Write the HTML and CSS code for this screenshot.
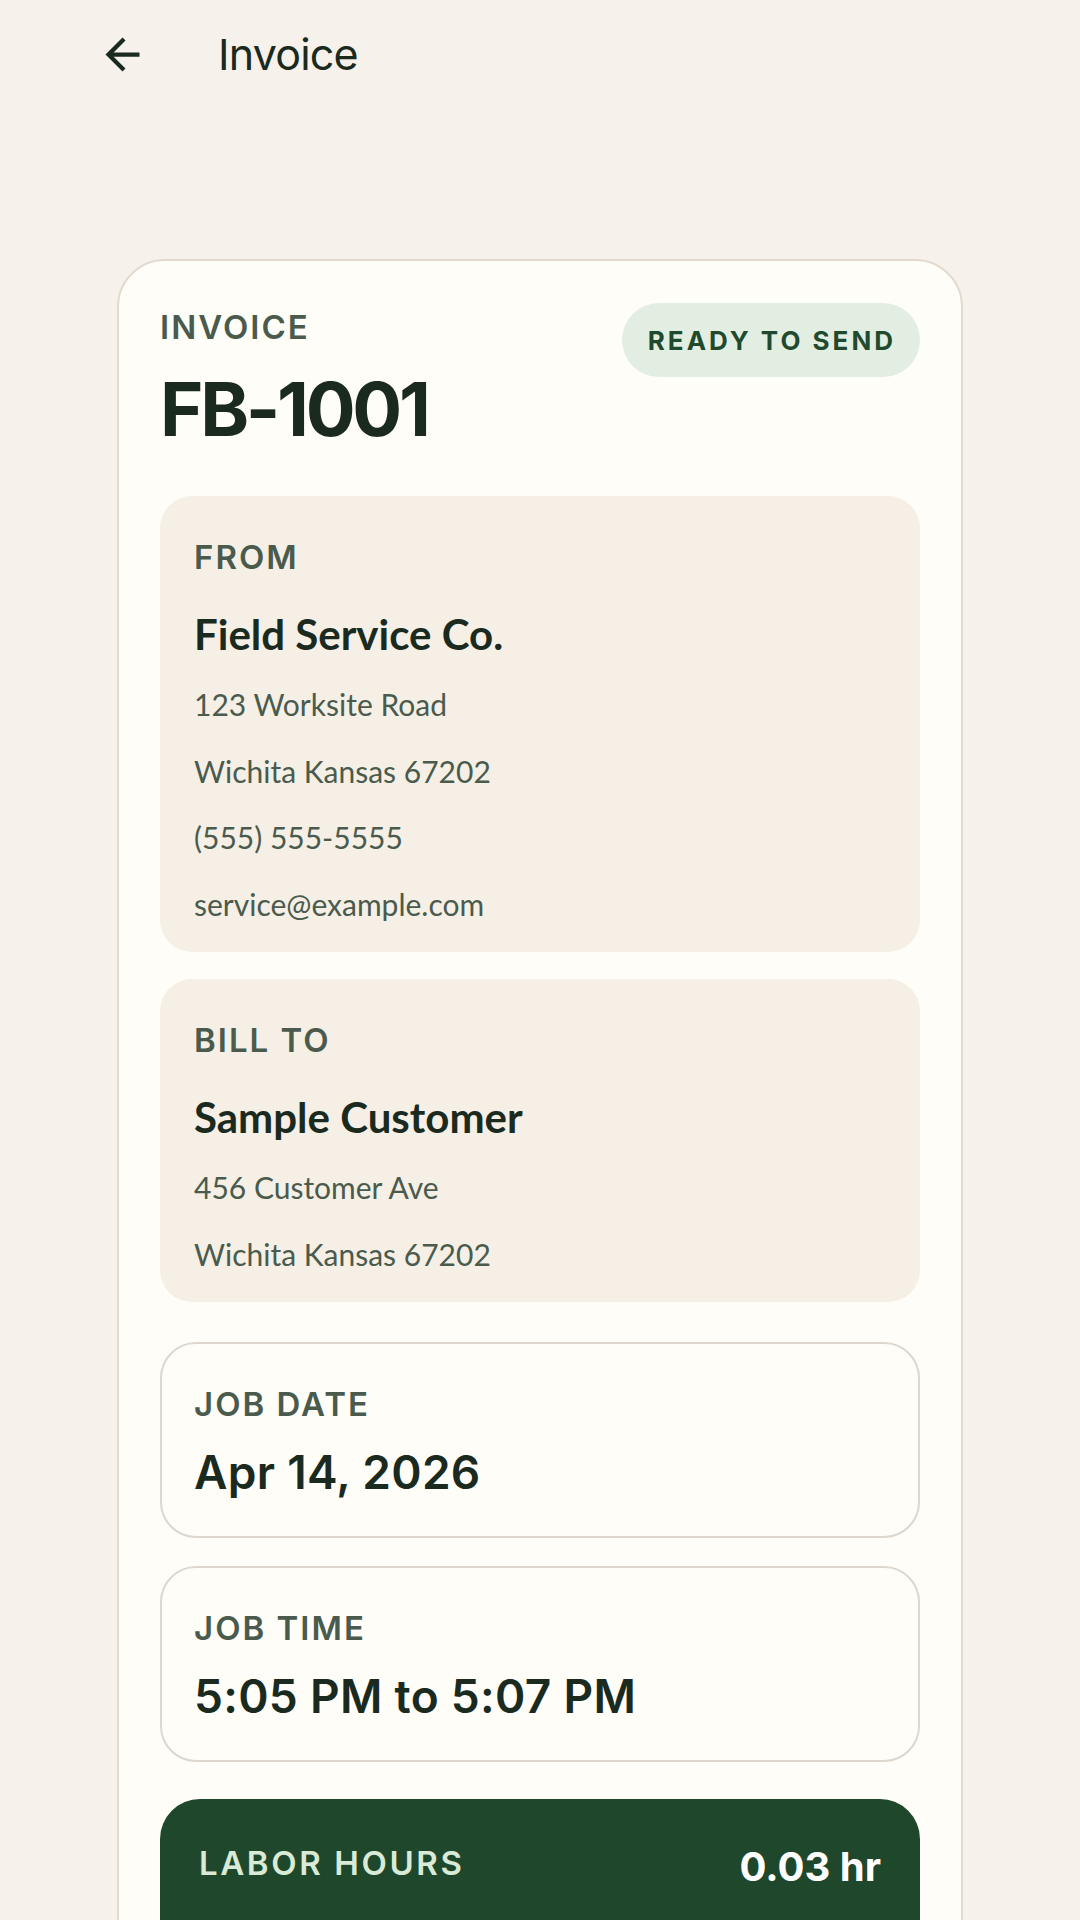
FILE: index.html
```html
<!DOCTYPE html>
<html lang="en">
<head>
<meta charset="utf-8">
<title>Invoice</title>
<link rel="stylesheet" href="styles.css">
</head>
<body>
<header class="topbar">
  <svg class="back" viewBox="0 0 24 24" aria-hidden="true"><path d="M20 11H7.83l5.59-5.59L12 4l-8 8 8 8 1.41-1.41L7.83 13H20v-2z"/></svg>
  <h1 class="title">Invoice</h1>
</header>
<main class="card">
  <div class="head">
    <div>
      <div class="eyebrow">INVOICE</div>
      <div class="number">FB-1001</div>
    </div>
    <div class="pill">READY TO SEND</div>
  </div>

  <section class="party">
    <div class="label">FROM</div>
    <div class="party-name">Field Service Co.</div>
    <div class="party-lines">
      <div class="party-line">123 Worksite Road</div>
      <div class="party-line">Wichita Kansas 67202</div>
      <div class="party-line">(555) 555-5555</div>
      <div class="party-line">service@example.com</div>
    </div>
  </section>

  <section class="party party-bill">
    <div class="label">BILL TO</div>
    <div class="party-name">Sample Customer</div>
    <div class="party-lines">
      <div class="party-line">456 Customer Ave</div>
      <div class="party-line">Wichita Kansas 67202</div>
    </div>
  </section>

  <section class="field field-date">
    <div class="label">JOB DATE</div>
    <div class="field-value">Apr 14, 2026</div>
  </section>

  <section class="field field-time">
    <div class="label">JOB TIME</div>
    <div class="field-value">5:05 PM to 5:07 PM</div>
  </section>

  <section class="labor">
    <div class="labor-label">LABOR HOURS</div>
    <div class="labor-value">0.03 hr</div>
  </section>
</main>
</body>
</html>
```
FILE: styles.css
```css
* { box-sizing: border-box; }

body {
  margin: 0;
  background: #f6f2eb;
  font-family: Inter, "Noto Sans", sans-serif;
  color: #1b2a1e;
}

.topbar {
  height: 108px;
  display: flex;
  align-items: center;
  padding-left: 97px;
}

.back {
  width: 51px;
  height: 51px;
  display: block;
  fill: #1b2a1e;
}

.title {
  margin: 0 0 0 70px;
  font-size: 43px;
  font-weight: 400;
  line-height: 52px;
  letter-spacing: -0.8px;
  color: #1b2a1e;
}

.card {
  display: block;
  margin: 151px 117px 0;
  background: #fffdf8;
  border: 2px solid #e2dacd;
  border-radius: 48px;
  padding: 42px 41px 60px;
}

.head {
  display: flex;
  justify-content: space-between;
  align-items: flex-start;
}

.eyebrow {
  margin-top: 4px;
  font-size: 33px;
  font-weight: 600;
  line-height: 40px;
  letter-spacing: 2px;
  color: #4a5b4d;
}

.number {
  margin-top: 22px;
  font-size: 74px;
  font-weight: 700;
  line-height: 81px;
  letter-spacing: -3.3px;
  color: #1b2a1e;
}

.pill {
  height: 74px;
  padding: 0 24px 0 26px;
  border-radius: 37px;
  background: #e3eee3;
  color: #1f4a2e;
  font-size: 26px;
  font-weight: 700;
  letter-spacing: 3px;
  display: flex;
  align-items: center;
}

.party {
  margin-top: 46px;
  background: #f5efe5;
  border-radius: 32px;
  padding: 41px 34px 15px;
}

.party-bill {
  margin-top: 27px;
}

.label {
  font-size: 33px;
  font-weight: 600;
  line-height: 40px;
  letter-spacing: 2px;
  color: #4a5b4d;
}

.party-name {
  margin-top: 32px;
  font-family: Lato, "Noto Sans", sans-serif;
  font-size: 42px;
  font-weight: 700;
  line-height: 50px;
  color: #1b2a1e;
}

.party-lines {
  margin-top: 12px;
}

.party-line {
  font-family: Lato, "Noto Sans", sans-serif;
  font-size: 30px;
  font-weight: 400;
  line-height: 66.5px;
  color: #4a5b4d;
}

.field {
  margin-top: 40px;
  border: 2px solid #ddd7cd;
  border-radius: 36px;
  padding: 40px 32px 36px;
}

.field-time {
  margin-top: 28px;
}

.field-value {
  margin-top: 20px;
  font-size: 46px;
  font-weight: 600;
  line-height: 56px;
  letter-spacing: 0.3px;
  color: #1b2a1e;
}

.labor {
  margin-top: 37px;
  background: #1f472c;
  border-radius: 40px;
  padding: 44px 39px 100px 39px;
  display: flex;
  justify-content: space-between;
  align-items: flex-start;
}

.labor-label {
  font-size: 33px;
  font-weight: 600;
  line-height: 40px;
  letter-spacing: 2.6px;
  color: #d9ead6;
}

.labor-value {
  font-size: 40px;
  font-weight: 700;
  line-height: 48px;
  color: #ffffff;
}
```
